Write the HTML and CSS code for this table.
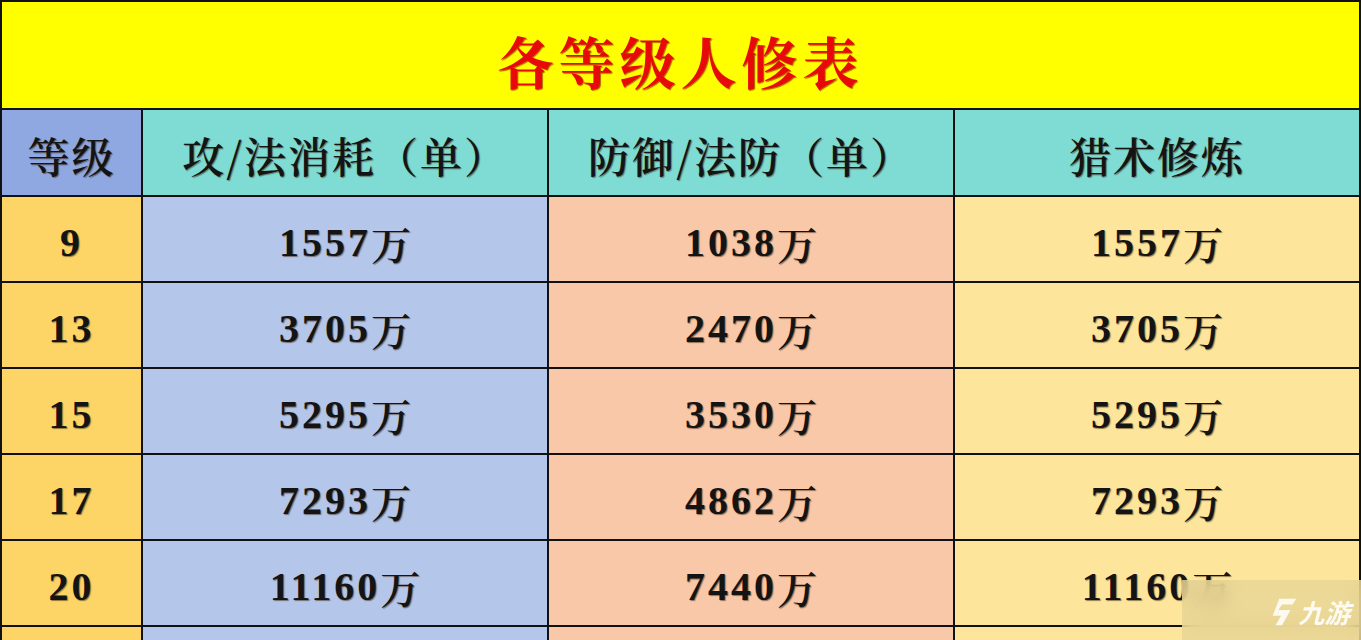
FILE: index.html
```html
<!DOCTYPE html>
<html lang="zh-CN">
<head>
<meta charset="utf-8">
<title>各等级人修表</title>
<link rel="stylesheet" href="styles.css">
</head>
<body>
<div class="sheet">
  <div class="cell title">各等级人修表</div>
  <div class="cell head head-lv">等级</div>
  <div class="cell head">攻/法消耗（单）</div>
  <div class="cell head">防御/法防（单）</div>
  <div class="cell head">猎术修炼</div>

  <div class="cell lv">9</div>
  <div class="cell c2">1557<span class="u">万</span></div>
  <div class="cell c3">1038<span class="u">万</span></div>
  <div class="cell c4">1557<span class="u">万</span></div>

  <div class="cell lv">13</div>
  <div class="cell c2">3705<span class="u">万</span></div>
  <div class="cell c3">2470<span class="u">万</span></div>
  <div class="cell c4">3705<span class="u">万</span></div>

  <div class="cell lv">15</div>
  <div class="cell c2">5295<span class="u">万</span></div>
  <div class="cell c3">3530<span class="u">万</span></div>
  <div class="cell c4">5295<span class="u">万</span></div>

  <div class="cell lv">17</div>
  <div class="cell c2">7293<span class="u">万</span></div>
  <div class="cell c3">4862<span class="u">万</span></div>
  <div class="cell c4">7293<span class="u">万</span></div>

  <div class="cell lv">20</div>
  <div class="cell c2">11160<span class="u">万</span></div>
  <div class="cell c3">7440<span class="u">万</span></div>
  <div class="cell c4">11160<span class="u">万</span></div>

  <div class="cell lv"></div>
  <div class="cell c2"></div>
  <div class="cell c3"></div>
  <div class="cell c4"></div>
</div>
<div class="watermark">
  <svg class="wm-logo" viewBox="0 0 34 34" width="32" height="32">
    <path d="M13 3 L31 3 L27 9 L16 9 L12 15 L25 15 L16 31 L9 31 L15 21 L6 21 Z" fill="rgba(255,255,255,0.85)"/>
  </svg>
  <span class="wm-text">九游</span>
</div>
</body>
</html>
```
FILE: styles.css
```css
html, body {
  margin: 0;
  padding: 0;
  background: #ffffff;
}
body {
  width: 1361px;
  height: 640px;
  overflow: hidden;
  position: relative;
}
.sheet {
  width: 1361px;
  box-sizing: border-box;
  padding: 2px;
  background: #111;
  display: grid;
  grid-template-columns: 139px 404px 404px 1fr;
  grid-template-rows: 106px 85px repeat(6, 84px);
  gap: 2px;
}
.cell {
  display: flex;
  align-items: center;
  justify-content: center;
  color: #141414;
  font-family: "Noto Serif CJK SC", "Liberation Serif", "Noto Sans CJK SC", serif;
  font-weight: 700;
  text-shadow: 1px 1px 1px rgba(60, 40, 20, 0.55);
}
.title {
  grid-column: 1 / 5;
  background: #ffff00;
  color: #e80a0a;
  font-size: 56px;
  letter-spacing: 5px;
  padding-top: 10px;
  box-sizing: border-box;
  text-shadow: 1px 1px 1px rgba(120, 0, 0, 0.6);
}
.head {
  background: #7edcd4;
  font-size: 42px;
  font-weight: 600;
  letter-spacing: 2px;
  padding-top: 4px;
  box-sizing: border-box;
}
.head-lv {
  background: #8fa8e1;
}
.lv, .c2, .c3, .c4 {
  font-family: "Liberation Serif", "Noto Serif CJK SC", "Noto Sans CJK SC", serif;
  font-size: 40px;
  letter-spacing: 3px;
  padding-top: 6px;
  box-sizing: border-box;
}
.u {
  font-weight: 600;
  letter-spacing: 0;
}
.lv { background: #fdd566; }
.c2 { background: #b5c6eb; }
.c3 { background: #f9c8a8; }
.c4 { background: #fde69b; }

.watermark {
  position: absolute;
  left: 1182px;
  top: 580px;
  width: 179px;
  height: 60px;
  background: rgba(232, 214, 150, 0.8);
  backdrop-filter: blur(10px);
  display: flex;
  align-items: center;
  justify-content: flex-end;
  gap: 2px;
  padding-right: 8px;
  padding-top: 4px;
  box-sizing: border-box;
}
.wm-logo {
  display: block;
  flex-shrink: 0;
}
.wm-text {
  color: rgba(255, 255, 255, 0.88);
  font-family: "Noto Sans CJK SC", sans-serif;
  font-weight: 700;
  font-size: 26px;
  line-height: 1.2;
  transform: skewX(-14deg);
  letter-spacing: 0;
}
```
